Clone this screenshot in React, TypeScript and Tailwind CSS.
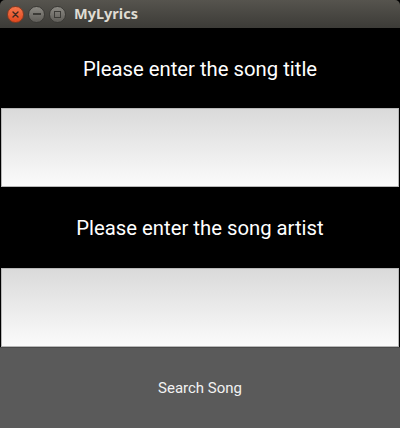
import React, { useState } from "react";

const TitleBar: React.FC = () => (
  <div className="h-[28px] flex items-center rounded-t-[5px] bg-gradient-to-b from-[#56544e] to-[#3c3b37] px-[7px]">
    <div className="flex items-center gap-[4px]">
      <div className="w-[17px] h-[17px] rounded-full bg-gradient-to-b from-[#f5764b] to-[#e0471c] border border-[#8a3a20] flex items-center justify-center">
        <svg width="7" height="7" viewBox="0 0 7 7">
          <path d="M1 1 L6 6 M6 1 L1 6" stroke="#3c2a22" strokeWidth="1.4" strokeLinecap="round" />
        </svg>
      </div>
      <div className="w-[17px] h-[17px] rounded-full bg-gradient-to-b from-[#8c8a84] to-[#5f5d58] border border-[#3a3935] flex items-center justify-center">
        <div className="w-[8px] h-[2px] bg-[#3c3b37]" />
      </div>
      <div className="w-[17px] h-[17px] rounded-full bg-gradient-to-b from-[#8c8a84] to-[#5f5d58] border border-[#3a3935] flex items-center justify-center">
        <div className="w-[7px] h-[7px] border-[1.5px] border-[#3c3b37]" />
      </div>
    </div>
    <span className="ml-[8px] text-[14.5px] font-bold text-[#dfdbd2] font-['Noto_Sans',sans-serif]">
      MyLyrics
    </span>
  </div>
);

const Field: React.FC<{ value: string; onChange: (v: string) => void; h: string }> = ({ value, onChange, h }) => (
  <div className={`px-[1px] ${h}`}>
    <input
      value={value}
      onChange={(e) => onChange(e.target.value)}
      className="w-full h-full border border-[#b8b8b8] bg-gradient-to-b from-[#dadada] to-[#fbfbfb] outline-none px-2 text-[18px] font-['Roboto',sans-serif]"
    />
  </div>
);

export default function App() {
  const [title, setTitle] = useState("");
  const [artist, setArtist] = useState("");

  return (
    <div className="w-[400px] h-[428px] bg-black flex flex-col font-['Roboto',sans-serif]">
      <TitleBar />
      <div className="h-[80px] flex items-center justify-center text-white text-[20.3px] pt-[2px]">
        Please enter the song title
      </div>
      <Field value={title} onChange={setTitle} h="h-[79px]" />
      <div className="h-[81px] flex items-center justify-center text-white text-[20.3px] pt-[2px]">
        Please enter the song artist
      </div>
      <Field value={artist} onChange={setArtist} h="h-[79px]" />
      <button className="h-[81px] bg-[#5a5a5a] border-t border-[#4a4a4a] text-[#f2f2f2] text-[15px] flex items-center justify-center">
        Search Song
      </button>
    </div>
  );
}
